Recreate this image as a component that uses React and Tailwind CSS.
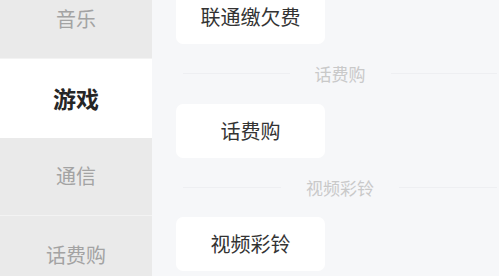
import React from "react";

const FONT = { fontFamily: '"Noto Sans CJK SC", "Noto Sans", sans-serif' };

function SideItem({ label, active }) {
  return (
    <div
      className={
        "h-[78.5px] shrink-0 flex items-center justify-center border-b " +
        (active
          ? "bg-white border-white"
          : "bg-[#eaeaea] border-[#f3f3f3]")
      }
    >
      <span
        className={
          active
            ? "text-[23px] font-bold text-[#262626]"
            : "text-[20px] text-[#a3a3a3]"
        }
      >
        {label}
      </span>
    </div>
  );
}

function Card({ label }) {
  return (
    <div className="w-[149px] h-[54px] bg-white rounded-[7px] flex items-center justify-center shrink-0">
      <span className="text-[20px] text-[#333333]">{label}</span>
    </div>
  );
}

function Divider({ label }) {
  return (
    <div className="h-[59.5px] shrink-0 flex items-center ml-[7px] w-[314px]">
      <div className="flex-1 h-px bg-[#eeeff2]" />
      <span className="px-[25px] text-[17px] text-[#c9c9c9] leading-none">{label}</span>
      <div className="flex-1 h-px bg-[#eeeff2]" />
    </div>
  );
}

export default function App() {
  return (
    <div className="w-[499px] h-[276px] overflow-hidden flex items-start bg-[#f6f7f9]" style={FONT}>
      <div className="w-[152px] shrink-0 bg-[#eaeaea] flex flex-col -mt-[19.5px]">
        <SideItem label="音乐" />
        <SideItem label="游戏" active />
        <SideItem label="通信" />
        <SideItem label="话费购" />
      </div>
      <div className="flex-1 flex flex-col pl-[24px] -mt-[10px]">
        <Card label="联通缴欠费" />
        <Divider label="话费购" />
        <Card label="话费购" />
        <Divider label="视频彩铃" />
        <Card label="视频彩铃" />
      </div>
    </div>
  );
}
